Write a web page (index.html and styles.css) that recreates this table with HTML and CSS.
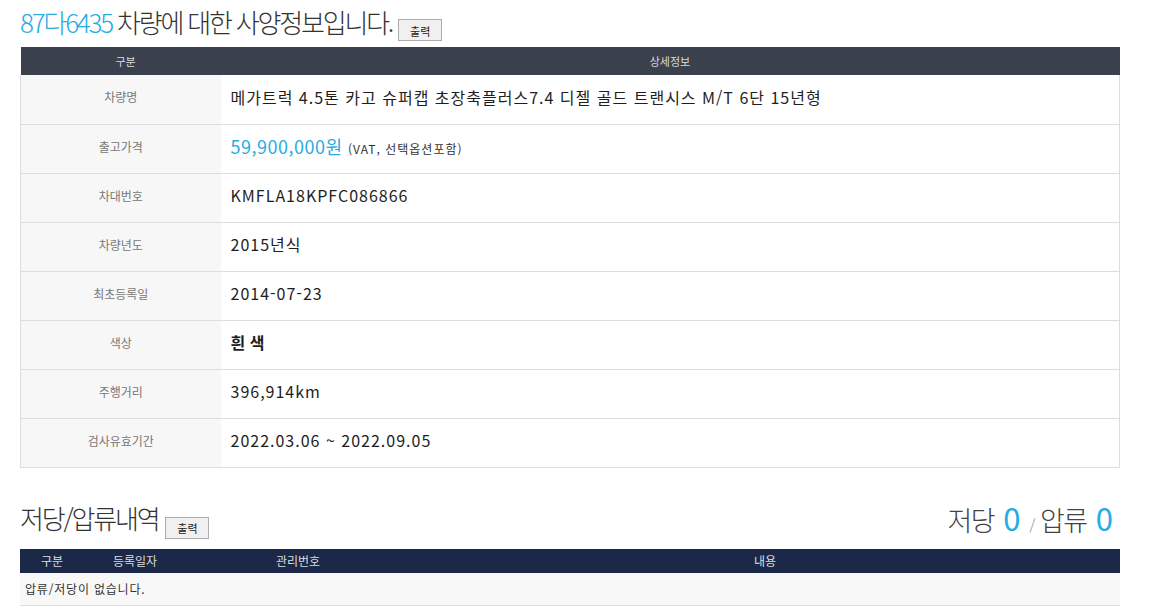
FILE: index.html
```html
<!DOCTYPE html>
<html lang="ko">
<head>
<meta charset="utf-8">
<title>사양정보</title>
<link rel="stylesheet" href="styles.css">
</head>
<body>
<div class="wrap">
  <div class="title-row">
    <h2 class="title"><span class="blue">87다6435</span> 차량에 대한 사양정보입니다.</h2>
    <button class="print-btn" type="button">출력</button>
  </div>
  <table class="spec">
    <thead>
      <tr><th class="c-label">구분</th><th>상세정보</th></tr>
    </thead>
    <tbody>
      <tr><td class="lbl">차량명</td><td class="val">메가트럭 4.5톤 카고 슈퍼캡 초장축플러스7.4 디젤 골드 트랜시스 M/T 6단 15년형</td></tr>
      <tr><td class="lbl">출고가격</td><td class="val"><span class="price">59,900,000원</span> <span class="note">(VAT, 선택옵션포함)</span></td></tr>
      <tr><td class="lbl">차대번호</td><td class="val">KMFLA18KPFC086866</td></tr>
      <tr><td class="lbl">차량년도</td><td class="val">2015년식</td></tr>
      <tr><td class="lbl">최초등록일</td><td class="val">2014-07-23</td></tr>
      <tr><td class="lbl">색상</td><td class="val strong">흰 색</td></tr>
      <tr><td class="lbl">주행거리</td><td class="val">396,914km</td></tr>
      <tr><td class="lbl">검사유효기간</td><td class="val">2022.03.06 ~ 2022.09.05</td></tr>
    </tbody>
  </table>

  <div class="sub-row">
    <div class="left">
      <h2 class="title">저당/압류내역</h2>
      <button class="print-btn" type="button">출력</button>
    </div>
    <div class="summary">저당 <span class="num">0</span> <span class="slash">/</span> 압류 <span class="num">0</span></div>
  </div>
  <table class="lien">
    <thead>
      <tr><th class="w1">구분</th><th class="w2">등록일자</th><th class="w3">관리번호</th><th>내용</th></tr>
    </thead>
    <tbody>
      <tr><td colspan="4" class="empty">압류/저당이 없습니다.</td></tr>
    </tbody>
  </table>
</div>
</body>
</html>
```

FILE: styles.css
```css
* { box-sizing: border-box; }
body {
  margin: 0;
  background: #fff;
  font-family: "Noto Sans CJK KR", "Noto Sans", sans-serif;
  color: #333;
}
.wrap {
  width: 1100px;
  margin-left: 20px;
}
.title-row {
  display: flex;
  align-items: flex-start;
  height: 47px;
}
.title {
  margin: 5px 0 0;
  font-size: 26px;
  font-weight: 300;
  letter-spacing: -2.2px;
  line-height: 34px;
  color: #333;
}
.title-row .print-btn { margin: 19px 0 0 6px; }
.blue { color: #29abe2; }
.print-btn {
  font-family: "Noto Sans CJK KR", sans-serif;
  font-size: 11px;
  line-height: 14px;
  padding: 3px 0 2px;
  width: 44px;
  height: 22px;
  background: #f0f0f0;
  border: 1px solid #adadad;
  border-radius: 0;
  color: #222;
}
table {
  width: 100%;
  border-collapse: collapse;
  table-layout: fixed;
}
.spec thead th {
  background: #3b404d;
  color: #ddd;
  font-size: 11px;
  font-weight: 400;
  height: 28px;
  padding: 0;
}
.spec th.c-label { width: 200px; padding-left: 10px; }
.spec tbody td {
  height: 49px;
  border-bottom: 1px solid #ddd;
  padding: 0 0 5px;
}
.spec tbody tr td:first-child { border-left: 1px solid #ddd; }
.spec tbody tr td:last-child { border-right: 1px solid #ddd; }
.lbl {
  background: #f7f7f7;
  color: #777;
  font-size: 12px;
  text-align: center;
}
.spec tbody td.val {
  padding-left: 10px;
  font-size: 16px;
  font-weight: 400;
  color: #1e1e1e;
  letter-spacing: 1px;
}
.spec tbody td.val.strong { font-weight: 700; letter-spacing: 0; }
.price {
  color: #29abe2;
  font-size: 18px;
  letter-spacing: 0.5px;
}
.note {
  font-size: 12px;
  font-weight: 400;
  color: #333;
  letter-spacing: 1px;
}
.sub-row {
  display: flex;
  justify-content: space-between;
  align-items: flex-start;
  height: 81px;
}
.sub-row .left {
  display: flex;
  align-items: flex-start;
}
.sub-row .title { margin-top: 33px; }
.sub-row .print-btn { margin: 49px 0 0 7px; }
.summary {
  margin-top: 33px;
  font-size: 27px;
  line-height: 34px;
  font-weight: 300;
  color: #444;
  letter-spacing: -1.5px;
  padding-right: 4px;
}
.summary .num {
  color: #29abe2;
  font-size: 31px;
  font-weight: 400;
  letter-spacing: 0;
  margin: 0 3px;
}
.summary .slash {
  font-size: 15px;
  color: #888;
}
.lien thead th {
  background: #1b2847;
  color: #ddd;
  font-size: 12px;
  font-weight: 400;
  height: 24px;
  padding: 0;
}
.lien .w1 { width: 64px; }
.lien .w2 { width: 102px; }
.lien .w3 { width: 224px; }
.lien td.empty {
  background: #f8f8f8;
  height: 33px;
  border-bottom: 1px solid #ddd;
  font-size: 12px;
  color: #333;
  letter-spacing: 0.8px;
  padding: 0 0 0 5px;
}
```
